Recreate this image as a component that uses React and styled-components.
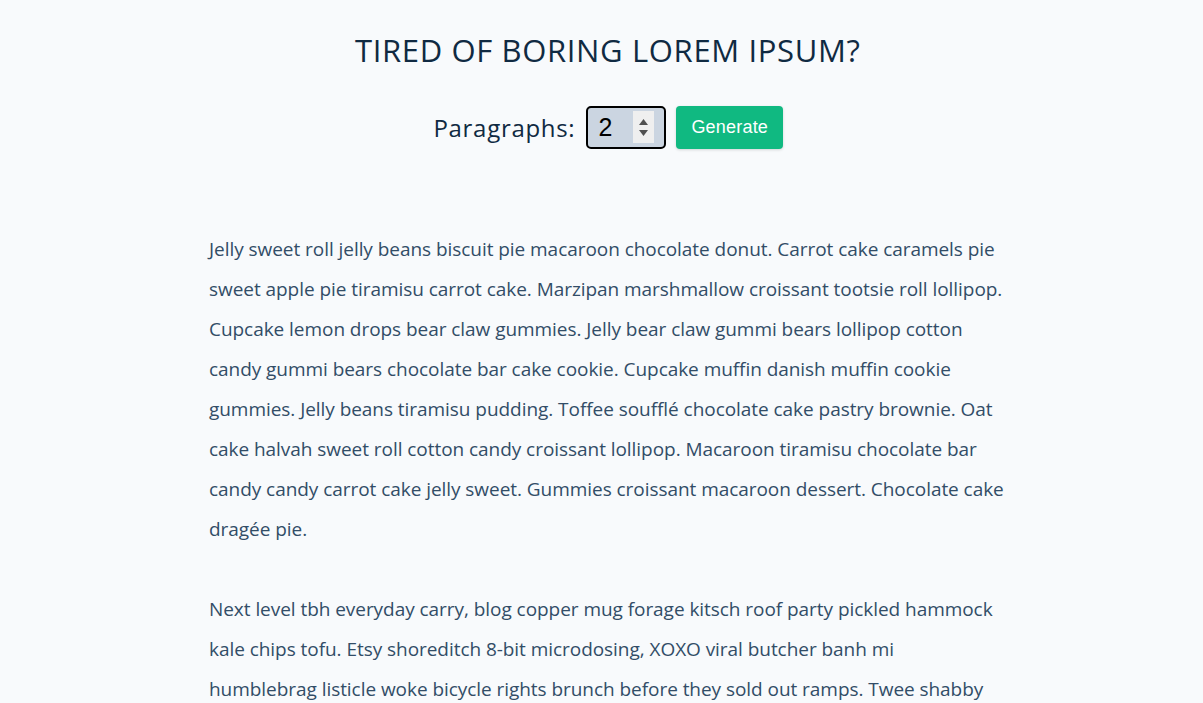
import React, { useState } from "react";
import styled, { createGlobalStyle } from "styled-components";

const Global = createGlobalStyle`
  * { box-sizing: border-box; }
  body {
    margin: 0;
    background: #f8fafc;
    font-family: "Open Sans", "Noto Sans", sans-serif;
    color: #324d67;
  }
`;

const Section = styled.section`
  width: 810px;
  margin: 0 auto;
  padding: 28px 0 0 12.5px;
`;

const Title = styled.h3`
  margin: 0;
  text-align: center;
  text-transform: uppercase;
  font-size: 31px;
  font-weight: 400;
  letter-spacing: 0.65px;
  line-height: 44px;
  color: #102a42;
`;

const Form = styled.form`
  display: flex;
  justify-content: center;
  align-items: center;
  margin: 34px 0 80px;
  padding-left: 1px;
`;

const Label = styled.label`
  font-size: 24px;
  color: #102a42;
  letter-spacing: 0.7px;
`;

const Stepper = styled.div`
  position: relative;
  margin: 0 10px 0 11px;
`;

const NumberInput = styled.input`
  display: block;
  width: 80px;
  height: 43px;
  padding: 2px 10px;
  border: 2px solid #000;
  border-radius: 5px;
  background: #cbd5e1;
  font-family: "Liberation Sans", Arial, sans-serif;
  font-size: 25px;
  color: #000;
  outline: none;
  -moz-appearance: textfield;
  &::-webkit-inner-spin-button,
  &::-webkit-outer-spin-button {
    -webkit-appearance: none;
    margin: 0;
  }
`;

const Spin = styled.div`
  position: absolute;
  top: 5px;
  right: 12px;
  width: 21px;
  height: 32px;
  background: #efefef;
  display: flex;
  flex-direction: column;
  align-items: center;
  justify-content: center;
  gap: 5px;
  pointer-events: none;
`;

const Button = styled.button`
  height: 43px;
  padding: 0 15px;
  border: none;
  border-radius: 4px;
  background: #10b981;
  color: #fff;
  font-family: "Liberation Sans", Arial, sans-serif;
  font-size: 18px;
  letter-spacing: 0.2px;
  box-shadow: 0 1px 3px rgba(0, 0, 0, 0.15);
  cursor: pointer;
`;

const Article = styled.article``;

const Paragraph = styled.p`
  margin: 0 0 40px;
  font-size: 19px;
  line-height: 40px;
  letter-spacing: -0.05px;
  color: #324d67;
`;

const texts = [
  "Jelly sweet roll jelly beans biscuit pie macaroon chocolate donut. Carrot cake caramels pie sweet apple pie tiramisu carrot cake. Marzipan marshmallow croissant tootsie roll lollipop. Cupcake lemon drops bear claw gummies. Jelly bear claw gummi bears lollipop cotton candy gummi bears chocolate bar cake cookie. Cupcake muffin danish muffin cookie gummies. Jelly beans tiramisu pudding. Toffee soufflé chocolate cake pastry brownie. Oat cake halvah sweet roll cotton candy croissant lollipop. Macaroon tiramisu chocolate bar candy candy carrot cake jelly sweet. Gummies croissant macaroon dessert. Chocolate cake dragée pie.",
  "Next level tbh everyday carry, blog copper mug forage kitsch roof party pickled hammock kale chips tofu. Etsy shoreditch 8-bit microdosing, XOXO viral butcher banh mi humblebrag listicle woke bicycle rights brunch before they sold out ramps. Twee shabby chic taiyaki flannel, enamel pin venmo vape four loko. Hexagon kale chips typewriter kitsch 8-bit organic plaid small batch keffiyeh ethical banh mi narwhal echo park cronut.",
];

export default function App() {
  const [count, setCount] = useState(2);
  return (
    <>
      <Global />
      <Section>
        <Title>tired of boring lorem ipsum?</Title>
        <Form onSubmit={(e) => e.preventDefault()}>
          <Label htmlFor="amount">Paragraphs:</Label>
          <Stepper>
            <NumberInput
              type="number"
              id="amount"
              value={count}
              onChange={(e) => setCount(e.target.value)}
            />
            <Spin>
              <svg width="9" height="6" viewBox="0 0 9 6">
                <path d="M0 6 L4.5 0 L9 6 Z" fill="#505050" />
              </svg>
              <svg width="9" height="6" viewBox="0 0 9 6">
                <path d="M0 0 L9 0 L4.5 6 Z" fill="#505050" />
              </svg>
            </Spin>
          </Stepper>
          <Button type="submit">Generate</Button>
        </Form>
        <Article>
          {texts.map((t, i) => (
            <Paragraph key={i}>{t}</Paragraph>
          ))}
        </Article>
      </Section>
    </>
  );
}
